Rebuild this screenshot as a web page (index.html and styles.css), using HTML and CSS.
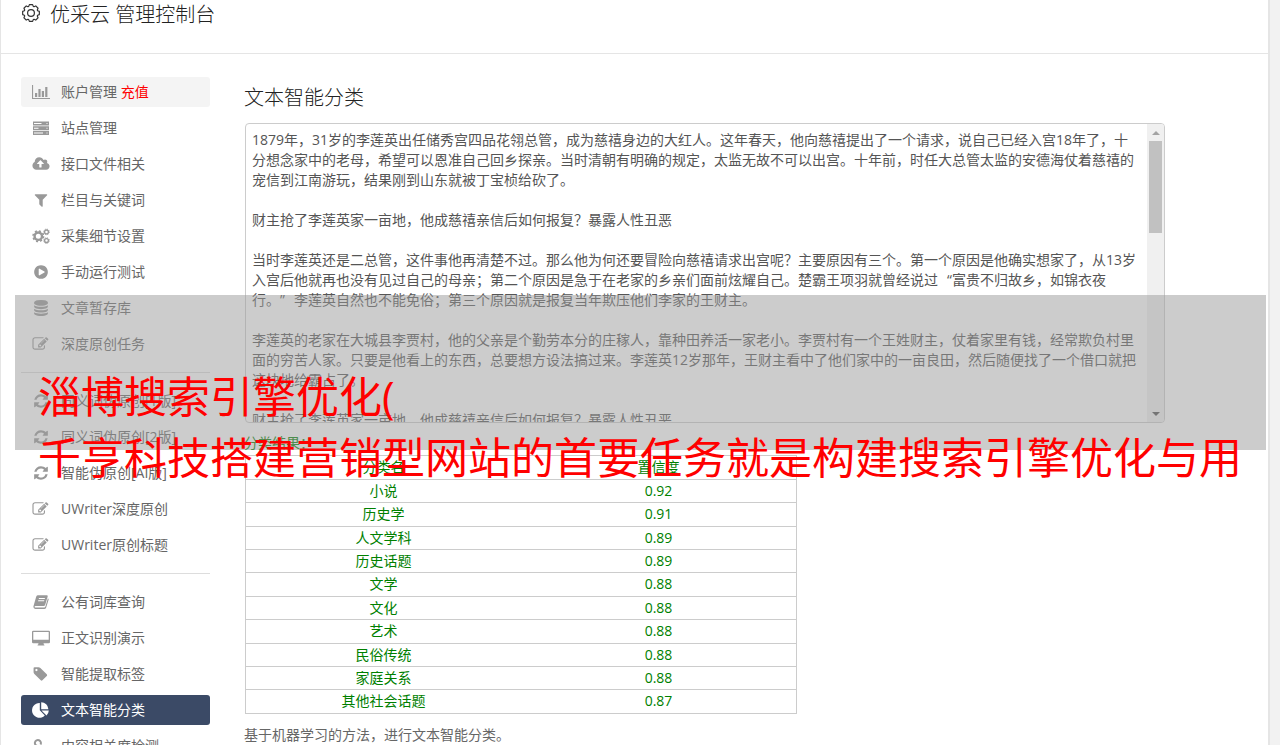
FILE: index.html
```html
<!DOCTYPE html>
<html lang="zh-CN">
<head>
    <meta charset="UTF-8">
    <meta name="viewport" content="width=device-width, initial-scale=1.0">
    <title>优采云 管理控制台</title>
    <link rel="stylesheet" href="styles.css">
</head>
<body>
    <svg class="sprite" width="0" height="0">
        <symbol id="i-chart" viewBox="0 0 20 16"><path d="M1 1h1.100v12.900H19V15H1zM4 9h2.200v4H4zM7.400 5h2.200v8H7.400zM10.800 7h2.200v6h-2.200zM14.200 3h2.200v10h-2.200z"/></symbol>
        <symbol id="i-server" viewBox="0 0 20 16"><path fill-rule="evenodd" d="M2 1.500h16v4H2zM3 3v1h7.500V3zM15.500 3v1h1V3zM2 6.300h16v4H2zM3 7.800v1h4.500v-1zM15.500 7.800v1h1v-1zM2 11.100h16v4H2zM3 12.600v1h9v-1zM15.500 12.600v1h1v-1z"/></symbol>
        <symbol id="i-cloud" viewBox="-160 0 2240 1792"><path d="M1280 864q0-14-9-23l-352-352q-9-9-23-9t-23 9l-351 351q-10 12-10 24 0 14 9 23t23 9h224v352q0 13 9.500 22.500t22.500 9.500h192q13 0 22.500-9.500t9.500-22.500v-352h224q13 0 22.500-9.500t9.500-22.500zm640 288q0 159-112.500 271.500t-271.500 112.500h-1088q-185 0-316.500-131.500t-131.500-316.500q0-130 70-240t188-165q-2-30-2-43 0-212 150-362t362-150q156 0 285.500 87t188.500 231q71-62 166-62 106 0 181 75t75 181q0 76-41 138 130 31 213.500 135.500t83.500 238.500z"/></symbol>
        <symbol id="i-filter" viewBox="-224 0 2240 1792"><path d="M1595 295q17 41-14 70l-493 493v742q0 42-39 59-13 5-25 5-27 0-45-19l-256-256q-19-19-19-45v-486l-493-493q-31-29-14-70 17-39 59-39h1280q42 0 59 39z"/></symbol>
        <symbol id="i-cogs" viewBox="0 0 20 16">
            <g fill="none" stroke="currentColor">
                <circle cx="7.300" cy="8.200" r="3.700" stroke-width="2.400"/>
                <circle cx="7.300" cy="8.200" r="5.300" stroke-width="1.500" stroke-dasharray="2.080 2.080"/>
                <circle cx="15.500" cy="3.900" r="1.900" stroke-width="1.300"/>
                <circle cx="15.500" cy="3.900" r="2.800" stroke-width="1" stroke-dasharray="1.100 1.100"/>
                <circle cx="15.500" cy="12.600" r="1.900" stroke-width="1.300"/>
                <circle cx="15.500" cy="12.600" r="2.800" stroke-width="1" stroke-dasharray="1.100 1.100"/>
            </g>
        </symbol>
        <symbol id="i-play" viewBox="-224 0 2240 1792"><path d="M896 128q209 0 385.500 103t279.500 279.500 103 385.500-103 385.500-279.500 279.500-385.500 103-385.500-103-279.500-279.500-103-385.500 103-385.500 279.500-279.500 385.500-103zm384 823q32-18 32-55t-32-55l-544-320q-31-19-64-1-32 19-32 56v640q0 37 32 56 16 8 32 8 17 0 32-9z"/></symbol>
        <symbol id="i-database" viewBox="-224 0 2240 1792"><path d="M896 768q237 0 443-43t325-127v170q0 69-103 128t-280 93.500-385 34.500-385-34.500-280-93.500-103-128v-170q119 84 325 127t443 43zm0 768q237 0 443-43t325-127v170q0 69-103 128t-280 93.500-385 34.500-385-34.500-280-93.500-103-128v-170q119 84 325 127t443 43zm0-384q237 0 443-43t325-127v170q0 69-103 128t-280 93.500-385 34.500-385-34.500-280-93.500-103-128v-170q119 84 325 127t443 43zm0-1152q208 0 385 34.500t280 93.500 103 128v128q0 69-103 128t-280 93.500-385 34.500-385-34.500-280-93.500-103-128v-128q0-69 103-128t280-93.500 385-34.500z"/></symbol>
        <symbol id="i-edit" viewBox="-160 0 2240 1792"><path d="M888 1184l116-116-152-152-116 116v56h96v96h56zm440-720q-16-16-33 1l-350 350q-17 17-1 33t33-1l350-350q17-17 1-33zm80 594v190q0 119-84.500 203.500t-203.500 84.500h-832q-119 0-203.500-84.500t-84.500-203.500v-832q0-119 84.500-203.500t203.500-84.500h832q63 0 117 25 15 7 18 23 3 17-9 29l-49 49q-14 14-32 8-23-6-45-6h-832q-66 0-113 47t-47 113v832q0 66 47 113t113 47h832q66 0 113-47t47-113v-126q0-13 9-22l64-64q15-15 35-7t20 29zm-96-738l288 288-672 672h-288v-288zm444 132l-92 92-288-288 92-92q28-28 68-28t68 28l152 152q28 28 28 68t-28 68z"/></symbol>
        <symbol id="i-refresh" viewBox="-224 0 2240 1792"><path d="M1639 1056q0 5-1 7-64 268-268 434.500t-478 166.500q-146 0-282.500-55t-243.500-157l-129 129q-19 19-45 19t-45-19-19-45v-448q0-26 19-45t45-19h448q26 0 45 19t19 45-19 45l-137 137q71 66 161 102t187 36q134 0 250-65t186-179q11-17 53-117 8-23 30-23h192q13 0 22.500 9.500t9.500 22.500zm25-800v448q0 26-19 45t-45 19h-448q-26 0-45-19t-19-45 19-45l138-138q-148-137-349-137-134 0-250 65t-186 179q-11 17-53 117-8 23-30 23h-199q-13 0-22.500-9.500t-9.500-22.500v-7q65-268 270-434.500t480-166.500q146 0 284 55.500t245 156.500l130-129q19-19 45-19t45 19 19 45z"/></symbol>
        <symbol id="i-book" viewBox="0 0 20 16"><path fill-rule="evenodd" d="M6.600 1.200h9.200q1.200.1.900 1.300l-2.500 8.300q-.4 1.200-1.600 1.200H4.500q-1 .1-.9.900.2.600 1 .6h8.600q.9-.1 1.200-.9l2.500-8.400q1 .5.700 1.500l-2.400 7.700q-.5 1.500-2 1.500H4.300q-1.800-.2-1.900-1.900 0-.6.200-1.200l2.500-8.900q.4-1.500 1.500-1.700zM8 4l-.3 1h6l.3-1zM7.300 6.200l-.3 1h6l.3-1z"/></symbol>
        <symbol id="i-desktop" viewBox="0 0 20 16"><path fill-rule="evenodd" d="M2.200.8h15.600q1.200.1 1.200 1.200v10q0 1.200-1.200 1.200h-5.200v1q.9.300.9 1.300h-7q0-1 .9-1.300v-1H2.200Q1 13.200 1 12V2Q1 .9 2.200.8zM2.300 2v7.800h15.400V2z"/></symbol>
        <symbol id="i-tag" viewBox="-160 0 2240 1792"><path d="M576 448q0-53-37.500-90.500t-90.500-37.500-90.500 37.500-37.500 90.500 37.500 90.500 90.500 37.500 90.500-37.500 37.500-90.500zm1067 576q0 53-37 90l-491 492q-39 37-91 37-53 0-90-37l-715-716q-38-37-64.500-101t-26.500-117v-416q0-52 38-90t90-38h416q53 0 117 26.500t102 64.500l715 714q37 39 37 91z"/></symbol>
        <symbol id="i-pie" viewBox="0 0 20 16"><path d="M8.800 1v7.300l5 5.200A7.400 7.400 0 1 1 8.800 1zM10.200.3A7.300 7.300 0 0 1 17.400 7.300h-7.200zM10.500 8.500h7.300a7.300 7.300 0 0 1-2.300 5z"/></symbol>
        <symbol id="i-link" viewBox="0 0 20 16"><path fill="none" stroke="currentColor" stroke-width="2" d="M9.500 6.500a3 3 0 1 0-3 1.500q2 0 3 2l2 3h4"/></symbol>
        <symbol id="i-gear" viewBox="0 0 20 20">
            <path fill="none" stroke="currentColor" stroke-width="1.200" stroke-linejoin="round" d="M18.340 11.620L16.620 12.280 16.290 13.070 17.050 14.750 14.750 17.050 13.070 16.290 12.280 16.620 11.620 18.340H8.380L7.720 16.620 6.930 16.290 5.250 17.050 2.950 14.750 3.710 13.070 3.380 12.280 1.660 11.620V8.380L3.380 7.720 3.710 6.930 2.950 5.250 5.250 2.950 6.930 3.710 7.720 3.380 8.380 1.660H11.620L12.280 3.380 13.070 3.710 14.750 2.950 17.050 5.250 16.290 6.930 16.620 7.720 18.340 8.380z"/>
            <circle cx="10" cy="10" r="3.400" fill="none" stroke="currentColor" stroke-width="1.200"/>
        </symbol>
    </svg>

    <div class="page">
        <header class="header">
            <svg class="gear"><use href="#i-gear"/></svg>
            <h1>优采云 管理控制台</h1>
        </header>
        <div class="main">
            <nav class="sidebar">
                <a class="item hover"><svg><use href="#i-chart"/></svg><span>账户管理 <em>充值</em></span></a>
                <a class="item"><svg><use href="#i-server"/></svg>站点管理</a>
                <a class="item"><svg><use href="#i-cloud"/></svg>接口文件相关</a>
                <a class="item"><svg><use href="#i-filter"/></svg>栏目与关键词</a>
                <a class="item"><svg><use href="#i-cogs"/></svg>采集细节设置</a>
                <a class="item"><svg><use href="#i-play"/></svg>手动运行测试</a>
                <a class="item"><svg><use href="#i-database"/></svg>文章暂存库</a>
                <a class="item"><svg><use href="#i-edit"/></svg>深度原创任务</a>
                <hr>
                <a class="item"><svg><use href="#i-refresh"/></svg>同义词伪原创[1版]</a>
                <a class="item"><svg><use href="#i-refresh"/></svg>同义词伪原创[2版]</a>
                <a class="item"><svg><use href="#i-refresh"/></svg>智能伪原创[AI版]</a>
                <a class="item"><svg><use href="#i-edit"/></svg>UWriter深度原创</a>
                <a class="item"><svg><use href="#i-edit"/></svg>UWriter原创标题</a>
                <hr>
                <a class="item"><svg><use href="#i-book"/></svg>公有词库查询</a>
                <a class="item"><svg><use href="#i-desktop"/></svg>正文识别演示</a>
                <a class="item"><svg><use href="#i-tag"/></svg>智能提取标签</a>
                <a class="item active"><svg><use href="#i-pie"/></svg>文本智能分类</a>
                <a class="item"><svg><use href="#i-link"/></svg>内容相关度检测</a>
            </nav>

            <section class="content">
                <h2>文本智能分类</h2>
                <div class="textbox">
                    <div class="text">
                        <p>1879年，31岁的李莲英出任储秀宫四品花翎总管，成为慈禧身边的大红人。这年春天，他向慈禧提出了一个请求，说自己已经入宫18年了，十<br>分想念家中的老母，希望可以恩准自己回乡探亲。当时清朝有明确的规定，太监无故不可以出宫。十年前，时任大总管太监的安德海仗着慈禧的<br>宠信到江南游玩，结果刚到山东就被丁宝桢给砍了。</p>
                        <p>财主抢了李莲英家一亩地，他成慈禧亲信后如何报复？暴露人性丑恶</p>
                        <p>当时李莲英还是二总管，这件事他再清楚不过。那么他为何还要冒险向慈禧请求出宫呢？主要原因有三个。第一个原因是他确实想家了，从13岁<br>入宫后他就再也没有见过自己的母亲；第二个原因是急于在老家的乡亲们面前炫耀自己。楚霸王项羽就曾经说过<span class="quote">“</span>富贵不归故乡，如锦衣夜<br>行。<span class="quote close">”</span>李莲英自然也不能免俗；第三个原因就是报复当年欺压他们李家的王财主。</p>
                        <p>李莲英的老家在大城县李贾村，他的父亲是个勤劳本分的庄稼人，靠种田养活一家老小。李贾村有一个王姓财主，仗着家里有钱，经常欺负村里<br>面的穷苦人家。只要是他看上的东西，总要想方设法搞过来。李莲英12岁那年，王财主看中了他们家中的一亩良田，然后随便找了一个借口就把<br>这块地给霸占了。</p>
                        <p>财主抢了李莲英家一亩地，他成慈禧亲信后如何报复？暴露人性丑恶</p>
                    </div>
                    <div class="scrollbar">
                        <i class="up"></i>
                        <div class="thumb"></div>
                        <i class="down"></i>
                    </div>
                </div>
                <div class="result-title">分类结果：</div>
                <div class="result">
                    <div class="row"><span>分类名</span><span>置信度</span></div>
                    <div class="row"><span>小说</span><span>0.92</span></div>
                    <div class="row"><span>历史学</span><span>0.91</span></div>
                    <div class="row"><span>人文学科</span><span>0.89</span></div>
                    <div class="row"><span>历史话题</span><span>0.89</span></div>
                    <div class="row"><span>文学</span><span>0.88</span></div>
                    <div class="row"><span>文化</span><span>0.88</span></div>
                    <div class="row"><span>艺术</span><span>0.88</span></div>
                    <div class="row"><span>民俗传统</span><span>0.88</span></div>
                    <div class="row"><span>家庭关系</span><span>0.88</span></div>
                    <div class="row"><span>其他社会话题</span><span>0.87</span></div>
                </div>
                <p class="note">基于机器学习的方法，进行文本智能分类。</p>
            </section>
        </div>
    </div>

    <div class="banner"></div>
    <div class="caption">淄博搜索引擎优化(<br>千亨科技搭建营销型网站的首要任务就是构建搜索引擎优化与用</div>
</body>
</html>
```
FILE: styles.css
```css
* {
    box-sizing: border-box;
}
body {
    margin: 0;
    height: 745px;
    overflow: hidden;
    position: relative;
    background-color: #f2f2f2;
    font-family: "Open Sans", "Noto Sans CJK SC", sans-serif;
    font-size: 14px;
    color: #555;
}
.sprite {
    position: absolute;
}
.page {
    width: 1270px;
    height: 745px;
    overflow: hidden;
    background-color: #fff;
    border-left: 1px solid #e5e5e5;
    border-right: 2px solid #e5e5e5;
}
.header {
    display: flex;
    gap: 9px;
    height: 54px;
    padding-left: 20px;
    border-bottom: 1px solid #e5e5e5;
    color: #333;
}
.gear {
    width: 20px;
    height: 20px;
    margin-top: 3px;
}
h1, h2 {
    margin: 0;
    font-size: 20px;
    font-weight: 300;
    line-height: 30px;
    color: #222;
}
.main {
    display: flex;
    gap: 34px;
    padding: 23px 0 0 20px;
}
.sidebar {
    width: 189px;
    flex: none;
}
.item {
    display: flex;
    align-items: center;
    gap: 10px;
    height: 30px;
    margin-bottom: 6px;
    padding-left: 10px;
    border-radius: 3px;
    line-height: 30px;
    white-space: nowrap;
    color: #666;
}
.item svg {
    width: 20px;
    height: 16px;
    flex: none;
    color: #999;
    fill: #999;
}
.item em {
    font-style: normal;
    color: #f00;
}
.hover {
    background-color: #f4f4f4;
}
.active {
    background-color: #3b4a66;
    color: #fff;
}
.active svg {
    color: #fff;
    fill: #fff;
}
.sidebar hr {
    height: 1px;
    margin: 13px 0;
    border: 0;
    background-color: #ddd;
}
.content {
    width: 921px;
}
.content h2 {
    margin: 6px 0 10px;
}
.textbox {
    display: flex;
    justify-content: space-between;
    width: 920px;
    height: 300px;
    margin-left: 1px;
    overflow: hidden;
    border: 1px solid #ccc;
    border-radius: 4px;
}
.text {
    padding: 6px 0 0 6px;
    line-height: 20px;
    white-space: nowrap;
}
.text p {
    margin: 0 0 20px;
}
.quote {
    display: inline-block;
    width: 14px;
    text-align: right;
}
.close {
    text-align: left;
}
.scrollbar {
    display: flex;
    flex-direction: column;
    align-items: center;
    width: 17px;
    flex: none;
    background-color: #f0f0f0;
}
.thumb {
    width: 13px;
    height: 92px;
    margin-bottom: auto;
    background-color: #c1c1c1;
}
.up, .down {
    border: 4px solid transparent;
}
.up {
    margin: 7px 0 6px;
    border-top-width: 0;
    border-bottom-color: #a3a3a3;
}
.down {
    margin-bottom: 6px;
    border-bottom-width: 0;
    border-top-color: #505050;
}
.result-title {
    height: 32.4px;
    padding-top: 10px;
    line-height: 20px;
    color: #008000;
}
.result {
    width: 552px;
    margin-left: 1px;
    border: 1px solid #ccc;
    border-top: 0;
    color: #008000;
}
.row {
    display: grid;
    grid-template-columns: 1fr 1fr;
    height: 23.4px;
    border-top: 1px solid #ccc;
    line-height: 22.4px;
    text-align: center;
}
.note {
    margin: 11px 0 0;
    line-height: 20px;
    color: #666;
}
/* translucent strip with the headline over the page */
.banner {
    position: absolute;
    left: 15px;
    top: 295px;
    width: 1251px;
    height: 155px;
    background-color: rgba(153, 153, 153, 0.5);
}
.caption {
    position: absolute;
    left: 38px;
    top: 366px;
    font-size: 43px;
    line-height: 61px;
    white-space: nowrap;
    color: #f00;
}
```
